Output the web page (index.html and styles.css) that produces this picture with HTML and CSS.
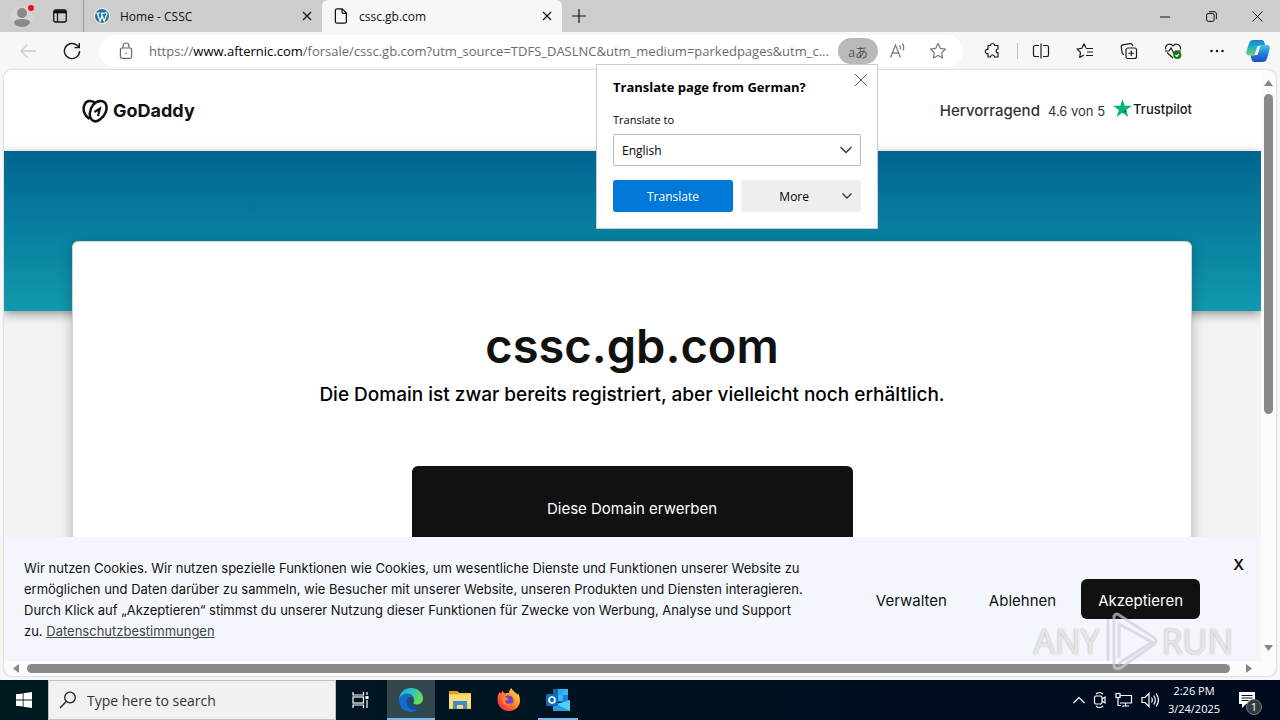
FILE: index.html
```html
<!DOCTYPE html>
<html lang="de">
<head>
    <meta charset="UTF-8">
    <meta name="viewport" content="width=device-width, initial-scale=1.0">
    <title>cssc.gb.com</title>
    <link rel="stylesheet" href="styles.css">
</head>
<body>
    <div class="tabbar">
        <button class="profile" aria-label="Profile">
            <svg width="24" height="24" viewBox="0 0 24 24"><circle cx="12" cy="13" r="11" fill="#d6d4d3"/><circle cx="12" cy="9" r="5" fill="#8c8a88"/><path d="M4 19c0-3 3-4 8-4s8 1 8 4c-2 3-5 4-8 4s-6-1-8-4z" fill="#8c8a88"/><circle cx="21" cy="4" r="3" fill="#e81123"/></svg>
        </button>
        <button class="workspaces" aria-label="Tab actions">
            <svg width="16" height="16" viewBox="0 0 16 16" fill="none" stroke="#111"><rect x="1.7" y="2" width="12.6" height="12" rx="2" stroke-width="1.3"/><path d="M2 3.8h12" stroke-width="3"/><path d="M5.5 5v9" stroke-width="1.2"/></svg>
        </button>
        <div class="tab">
            <svg width="16" height="16" viewBox="0 0 16 16"><circle cx="8" cy="8" r="8" fill="#e9f2f7"/><circle cx="8" cy="8" r="7" fill="#21759b"/><path d="M2.3 5.2h3.6M7 5.2h4M3.2 5.2l3 8 2-5.8M7.2 5.2l3 8 2.4-6.6c.4-1.3-.7-1.7-.7-2.8" fill="none" stroke="#fff" stroke-width="1.3"/></svg>
            <span class="tab-title">Home - CSSC</span>
            <button class="tab-close" aria-label="Close tab"><svg width="10" height="10" viewBox="0 0 10 10"><path d="M1 1l8 8M9 1L1 9"/></svg></button>
        </div>
        <div class="tab active">
            <svg width="16" height="16" viewBox="0 0 16 16" fill="none" stroke="#111" stroke-width="1.2"><path d="M4 .8h5.2l4.2 4.2v8.7c0 1-.6 1.5-1.5 1.5H4c-1 0-1.6-.5-1.6-1.5V2.3C2.4 1.3 3 .8 4 .8zM9 1v3c0 1 .4 1.4 1.4 1.4h3"/></svg>
            <span class="tab-title">cssc.gb.com</span>
            <button class="tab-close" aria-label="Close tab"><svg width="10" height="10" viewBox="0 0 10 10"><path d="M1 1l8 8M9 1L1 9"/></svg></button>
        </div>
        <button class="new-tab" aria-label="New tab"><svg width="14" height="14" viewBox="0 0 14 14"><path d="M7 0v14M0 7h14" stroke="#111" stroke-width="1.2"/></svg></button>
        <div class="window-controls">
            <button aria-label="Minimize"><svg width="11" height="11" viewBox="0 0 11 11"><path d="M0 6h10"/></svg></button>
            <button aria-label="Restore"><svg width="11" height="11" viewBox="0 0 11 11"><rect x=".6" y="2.5" width="7.5" height="7.9" rx="1.5"/><path d="M3 .7h5c1.5 0 2.4.9 2.4 2.4v5"/></svg></button>
            <button aria-label="Close"><svg width="11" height="11" viewBox="0 0 11 11"><path d="M.5.5l10 10M10.5.5l-10 10"/></svg></button>
        </div>
    </div>

    <div class="toolbar">
        <button class="nav-btn" aria-label="Back"><svg width="18" height="16" viewBox="0 0 18 16" fill="none" stroke="#c9c9c9" stroke-width="1.3"><path d="M17 8H2M8.5 1.5L2 8l6.5 6.5"/></svg></button>
        <button class="nav-btn" aria-label="Refresh"><svg width="18" height="18" viewBox="0 0 18 18" fill="none" stroke="#1b1b1b" stroke-width="1.4"><path d="M16.6 9a7.6 7.6 0 1 1-2.4-5.5l1.8 1.8M16.3 1v4.6h-4.8"/></svg></button>
        <div class="address">
            <svg width="14" height="18" viewBox="0 0 14 18" fill="none" stroke="#666" stroke-width="1.2"><rect x="1.4" y="6" width="11.2" height="10.4" rx="1.8"/><path d="M4 6V4a3 3 0 0 1 6 0v2"/><circle cx="7" cy="11.2" r=".8" fill="#666" stroke="none"/></svg>
            <a class="url" href="#">https://<b>www.afternic.com</b>/forsale/cssc.gb.com?utm_source=TDFS_DASLNC&amp;utm_medium=parkedpages&amp;utm_c...</a>
            <button class="translate-pill" aria-label="Translate">aあ</button>
            <button class="addr-btn" aria-label="Read aloud"><svg width="18" height="18" viewBox="0 0 18 18" fill="none" stroke="#777" stroke-width="1.2"><path d="M1.5 15.500L6.500 3l5 12.500M3.200 11.200h6.600M10.500 3.500c1 1 1.200 2.500.6 4M13 1.500c2 2 2 5 .8 7"/></svg></button>
            <button class="addr-btn" aria-label="Favorite"><svg width="18" height="18" viewBox="0 0 18 18" fill="none" stroke="#777" stroke-width="1.2"><path d="M9 1.500l2.300 4.800 5.200.7-3.800 3.700.9 5.300L9 13.500 4.400 16l.9-5.300L1.500 7l5.200-.7z" stroke-linejoin="round"/></svg></button>
        </div>
        <div class="tools">
            <button aria-label="Extensions"><svg width="18" height="18" viewBox="0 0 18 18"><path d="M4 3.500h2.500a2 2 0 0 1 4 0H14V7a1.600 1.600 0 0 0 0 3.800V15h-3.500a2 2 0 0 0-4 0H4v-3.500a2.100 2.100 0 1 1 0-4z" stroke-linejoin="round"/></svg></button>
            <span class="divider"></span>
            <button aria-label="Split screen"><svg width="18" height="18" viewBox="0 0 18 18"><path d="M7 3.500H3.200c-1 0-1.700.6-1.700 1.600v7.800c0 1 .7 1.600 1.700 1.600H7M11 3.500h3.800c1 0 1.700.6 1.700 1.600v7.800c0 1-.7 1.600-1.700 1.600H11M9 1.500v15"/></svg></button>
            <button aria-label="Favorites"><svg width="18" height="18" viewBox="0 0 18 18"><path d="M10 6L8 1.800 5.800 6.300 1 7l3.500 3.400-.8 5L8 13M10 6.500h7M11 10h6M10 13.500h7" stroke-linejoin="round"/></svg></button>
            <button aria-label="Collections"><svg width="18" height="18" viewBox="0 0 18 18"><rect x="6" y="6" width="10.5" height="10.5" rx="2"/><path d="M11.250 8.500v5.500M8.500 11.250H14M4 12.500c-1.200-.2-1.700-.8-1.900-1.700L1.300 5c-.2-1.200.4-2 1.500-2.200l7.400-1.200c1.200-.2 2 .3 2.300 1.500l.2 1"/></svg></button>
            <button aria-label="Browser essentials"><svg width="18" height="18" viewBox="0 0 18 18"><path d="M1.700 7.500C.8 2.200 6.500.8 9 4c2.500-3.200 8.200-1.800 7.300 3.500M3 10.500l6 5.500M1 9h4l2-3 3 5.500 1.500-2.500H17"/><circle cx="13.3" cy="13" r="4" fill="#107c10" stroke="none"/><path d="M11.500 13l1.300 1.300 2.300-2.500" stroke="#fff"/></svg></button>
            <button aria-label="Settings and more"><svg width="18" height="18" viewBox="0 0 18 18"><g fill="#1b1b1b" stroke="none"><circle cx="3.500" cy="9" r="1.3"/><circle cx="9" cy="9" r="1.3"/><circle cx="14.500" cy="9" r="1.3"/></g></svg></button>
            <button class="copilot" aria-label="Copilot">
                <svg width="24" height="24" viewBox="0 0 24 24">
                    <defs>
                        <linearGradient id="cp1" x1="0" y1="0" x2="0" y2="1"><stop offset="0" stop-color="#1b7fd0"/><stop offset=".5" stop-color="#1fb5c5"/><stop offset="1" stop-color="#7cd35d"/></linearGradient>
                        <linearGradient id="cp2" x1="0" y1="0" x2="0" y2="1"><stop offset="0" stop-color="#3cc8ea"/><stop offset=".6" stop-color="#2470d8"/><stop offset="1" stop-color="#1c4fc4"/></linearGradient>
                    </defs>
                    <path d="M7.500 1h8c2 0 2.500 1 3 3l.6 2h-3c-2 0-3 1-3.600 3l-1.700 5c-.5 1.700-1.300 2.500-3 2.500H3C.5 16.500-.2 14.500.5 12L3 4.500C3.800 2 5 1 7.500 1z" fill="url(#cp1)"/>
                    <path d="M16.500 23h-8c-2 0-2.500-1-3-3l-1-3.500h3.300c1.700 0 2.500-.8 3-2.500L12.500 9c.6-2 1.600-3 3.600-3H21c2.500 0 3.200 2 2.500 4.500L21 19.500c-.8 2.500-2 3.500-4.500 3.500z" fill="url(#cp2)"/>
                    <path d="M11.500 7h3l-3 9h-3z" fill="#f7f7f7"/>
                </svg>
            </button>
        </div>

        <div class="popup">
            <button class="popup-close" aria-label="Close"><svg width="12" height="12" viewBox="0 0 12 12"><path d="M0 0l12 12M12 0L0 12" stroke="#555"/></svg></button>
            <h2>Translate page from German?</h2>
            <label for="lang">Translate to</label>
            <div class="select-wrap">
                <select id="lang"><option>English</option></select>
                <svg width="12" height="8" viewBox="0 0 12 8"><path d="M.5 1L6 6.500 11.500 1"/></svg>
            </div>
            <div class="popup-actions">
                <button class="primary">Translate</button>
                <button class="more">More<svg width="10" height="8" viewBox="0 0 10 8"><path d="M.5 1.500L5 6l4.500-4.500"/></svg></button>
            </div>
        </div>
    </div>

    <div class="viewport">
        <div class="page">
            <header class="site-header">
                <a class="godaddy" href="#">
                    <svg width="26" height="24" viewBox="0 0 26 24" fill="none" stroke="#111" stroke-width="2.5"><path d="M7.500 20C2.500 17 .500 11 2.300 6.300 4 1.500 9.500.5 14 4.500"/><path d="M18.500 20c-2.700 2.500-6 3-8.500 1-3.500-3-2.700-10.500 1.200-15.300C15 1 21.500.6 23.800 5c2 4.500-.3 11.500-5.300 15z"/><path d="M12.500 13l5.300-3.300-1.800 7.300" stroke-width="2.200"/></svg>
                    <span>GoDaddy</span>
                </a>
                <div class="rating">
                    <strong>Hervorragend</strong>
                    <span>4.6 von 5</span>
                    <a class="trustpilot" href="#">
                        <svg width="19" height="18" viewBox="0 0 19 18"><path d="M9.500 0l2.200 6.800H19l-5.900 4.200 2.300 7-5.900-4.300L3.600 18l2.300-7L0 6.800h7.300z" fill="#00b67a"/><path d="M13.600 12.400l-.5-1.400-3.600 2.700z" fill="#005128"/></svg>
                        <span>Trustpilot</span>
                    </a>
                </div>
            </header>
            <div class="hero"></div>
            <main class="card">
                <h1>cssc.gb.com</h1>
                <p>Die Domain ist zwar bereits registriert, aber vielleicht noch erhältlich.</p>
                <button class="buy">Diese Domain erwerben</button>
            </main>
            <div class="cookies">
                <p>Wir nutzen Cookies. Wir nutzen spezielle Funktionen wie Cookies, um wesentliche Dienste und Funktionen unserer Website zu<br>
                ermöglichen und Daten darüber zu sammeln, wie Besucher mit unserer Website, unseren Produkten und Diensten interagieren.<br>
                Durch Klick auf „Akzeptieren“ stimmst du unserer Nutzung dieser Funktionen für Zwecke von Werbung, Analyse und Support<br>
                zu. <a href="#">Datenschutzbestimmungen</a></p>
                <div class="cookie-actions">
                    <button>Verwalten</button>
                    <button>Ablehnen</button>
                    <button class="accept">Akzeptieren</button>
                </div>
                <button class="cookie-close">X</button>
            </div>
        </div>
        <div class="vscroll">
            <svg width="9" height="6" viewBox="0 0 9 6"><path d="M0 6l4.500-6L9 6z"/></svg>
            <div class="track"><div class="thumb"></div></div>
            <svg width="9" height="6" viewBox="0 0 9 6"><path d="M0 0l4.500 6L9 0z"/></svg>
        </div>
        <div class="hscroll">
            <svg width="6" height="9" viewBox="0 0 6 9"><path d="M6 0L0 4.500 6 9z"/></svg>
            <div class="thumb"></div>
            <svg width="6" height="9" viewBox="0 0 6 9"><path d="M0 0l6 4.500L0 9z"/></svg>
        </div>
    </div>

    <div class="taskbar">
        <button class="task start" aria-label="Start"><svg width="16" height="16" viewBox="0 0 16 16" fill="#fff"><path d="M0 2.300l6.700-.9v6.200H0zM7.500 1.200L16 0v7.600H7.500zM0 8.400h6.700v6.200L0 13.700zM7.500 8.400H16V16l-8.500-1.200z"/></svg></button>
        <div class="search">
            <svg width="18" height="18" viewBox="0 0 18 18" fill="none" stroke="#222" stroke-width="1.3"><circle cx="11" cy="6.500" r="5.300"/><path d="M7.200 10.500L1 17"/></svg>
            <input type="text" placeholder="Type here to search" aria-label="Search">
        </div>
        <button class="task" aria-label="Task view"><svg width="18" height="16" viewBox="0 0 18 16" fill="none" stroke="#fff" stroke-width="1.2"><path d="M1 0v3h10.500V0M1 16v-3h10.500v3M15 0v3M15 8v8"/><rect x="1" y="5" width="10.5" height="6"/><path d="M13.500 5.500h3" stroke-width="3"/></svg></button>
        <button class="task current" aria-label="Edge">
            <svg width="24" height="24" viewBox="0 0 24 24">
                <defs><linearGradient id="eg" x1="0" y1="0" x2="1" y2=".5"><stop offset="0" stop-color="#2aa8dc"/><stop offset=".5" stop-color="#2fc4c0"/><stop offset="1" stop-color="#6ada58"/></linearGradient></defs>
                <path d="M0 11.500C.5 4.500 5.500 0 12 0c7 0 12 5 12 10.500 0 3.500-2.500 6-6 6-2.500 0-4-1-3.500-2 1.500-2 .5-6-4-6.500C5.500 7.600 1 9 0 11.500z" fill="url(#eg)"/>
                <path d="M0 12c.5-4 4-6.500 8-6.500 4.500 0 7 2.500 7 5.500-1-1.500-2.500-2-4-2-3 1-4 4-3 7 1.500 4 6 6 11 5-2 2-4.500 3-7 3C5 24 0 18.500 0 12z" fill="#1170c4"/>
                <path d="M8.500 11c-2 4 0 9 4.500 10.500 3.500 1 7-.5 9-3.300-5 2-11.500-.2-11.500-5 0-1 .3-2 .8-3-1 .1-2 .1-2.800.8z" fill="#0d4f9e"/>
            </svg>
        </button>
        <button class="task" aria-label="File Explorer"><svg width="22" height="18" viewBox="0 0 22 18"><path d="M0 0h8l2 2h12v16H0z" fill="#f9c94a"/><path d="M0 0h8l2 2-2 1H0z" fill="#e29d25"/><path d="M0 4h22v13H0z" fill="#fddb77"/><path d="M4 10h14v8h-4v-4H8v4H4z" fill="#3a8fd0"/></svg></button>
        <button class="task" aria-label="Firefox">
            <svg width="24" height="24" viewBox="0 0 24 24">
                <defs><linearGradient id="ff" x1="1" y1="0" x2="0" y2="1"><stop offset="0" stop-color="#fff04a"/><stop offset=".4" stop-color="#ff9a28"/><stop offset=".75" stop-color="#ff4242"/><stop offset="1" stop-color="#e02080"/></linearGradient></defs>
                <path d="M3 3.500c0 1 .3 1.700.7 2.200L6 2.500c0 1.500.7 2.500 2 3C10 4.800 11 5 12 5c0-2 1-4 2.500-5 .5 3 5 4.500 6 7L21 5c3 6 2.500 11-.7 14.500C16 24 8 24.500 3.500 19.500-.5 15-.5 8 3 3.500z" fill="url(#ff)"/>
                <path d="M8 9c4-3 8-1 8.500 3 .3 4-3.500 6-6.500 4.500-2-1-3-2.500-2.500-4l4-1c-1-1.500-2.500-2-3.500-2.500z" fill="#7a3bd0"/>
                <path d="M5 10c2-1.500 5-.5 6.500 1.200L8 13c.8 3 5 3.500 7 2-1.500 3.500-8 3.500-9.500-.5C5 13 4.500 11.500 5 10z" fill="#ff8a1f"/>
            </svg>
        </button>
        <button class="task running" aria-label="Outlook"><svg width="24" height="22" viewBox="0 0 24 22"><rect x="7" y="0" width="15" height="13" fill="#1066b5"/><path d="M12 0h5v6h-5z" fill="#28a8ea"/><path d="M17 0h5v6h-5zM12 6h5v6h-5z" fill="#35b8f1"/><path d="M17 6h5v6h-5z" fill="#1584d2"/><path d="M7 12l8 4 9-5v11H7z" fill="#2b9be0"/><path d="M24 11v11L10 15z" fill="#50d0f5"/><rect x="0" y="5" width="12" height="12" rx="1" fill="#0f6cbd"/><circle cx="6" cy="11" r="3" fill="none" stroke="#fff" stroke-width="1.7"/></svg></button>
        <div class="tray">
            <svg width="12" height="8" viewBox="0 0 12 8"><path d="M.5 7L6 1.500 11.500 7"/></svg>
            <svg width="14" height="18" viewBox="0 0 14 18"><path d="M3 3c2-2 5-2 7 0M3 15c2 2 5 2 7 0"/><rect x="1.5" y="5" width="7.5" height="8" rx="1.5"/><path d="M9 8l3-2v6l-3-2"/></svg>
            <svg width="18" height="16" viewBox="0 0 18 16"><path d="M5 3.500h11.500v7.500H5M10.500 11v3M7 14h7M3 6v7.500h3"/><rect x="1" y="1.5" width="4" height="4"/></svg>
            <svg width="18" height="16" viewBox="0 0 18 16"><path d="M1 5.500h3l4-4v13l-4-4H1zM10.500 5.500c1 1.500 1 3.500 0 5M12.800 3.500c2 2.500 2 6.500 0 9M15 1.500c3 4 3 9 0 13"/></svg>
            <div class="clock"><span>2:26 PM</span><span>3/24/2025</span></div>
            <div class="notify">
                <svg width="18" height="18" viewBox="0 0 18 18"><path d="M1 1h16v12H8l-4 4v-4H1z" fill="#fff" stroke="none"/><path d="M3.500 4.500h11M3.500 7h11M3.500 9.500h7" stroke="#04101c"/></svg>
                <span class="count">1</span>
            </div>
        </div>
    </div>

    <div class="watermark">
        <span>ANY</span>
        <svg width="54" height="62" viewBox="0 0 54 62"><path d="M4 9v42M10 5v50M15 48V14l33 18-34 22M15 5l34 22c4 2 4 6 0 8L18 57c-4 3-8 2-8-2M10 8c0-4 3-5 5-3"/></svg>
        <span>RUN</span>
    </div>
</body>
</html>
```
FILE: styles.css
```css
* {
    margin: 0;
    padding: 0;
    box-sizing: border-box;
}

body {
    height: 100vh;
    display: flex;
    flex-direction: column;
    overflow: hidden;
    background: #f7f7f7;
    font-family: "Open Sans", "Noto Sans", "Noto Sans CJK JP", sans-serif;
    font-size: 12px;
    color: #111;
}

button {
    border: none;
    background: none;
    font: inherit;
    color: inherit;
    display: flex;
    align-items: center;
    justify-content: center;
    cursor: pointer;
}

svg {
    flex: none;
}

a {
    color: inherit;
    text-decoration: none;
}

/* Tabs */
.tabbar {
    height: 32px;
    flex: none;
    display: flex;
    background: #cdcdcd;
}

.profile {
    width: 44px;
}

.workspaces {
    width: 32px;
}

.tab {
    width: 239px;
    margin-left: 7px;
    padding: 0 8px 0 10px;
    display: flex;
    align-items: center;
    gap: 10px;
    border-left: 1px solid #999;
}

.tab.active {
    width: 240px;
    margin-left: 0;
    padding-left: 11px;
    background: #f7f7f7;
    border-left: none;
    border-radius: 6px 6px 0 0;
}

.tab-title {
    flex: 1;
}

.tab-close {
    width: 14px;
    height: 20px;
}

.tab-close svg {
    stroke: #111;
    stroke-width: 1.2;
}

.new-tab {
    width: 34px;
}

.window-controls {
    margin-left: auto;
    display: flex;
}

.window-controls button {
    width: 46px;
}

.window-controls svg {
    fill: none;
    stroke: #111;
}

/* Toolbar */
.toolbar {
    height: 38px;
    flex: none;
    display: flex;
    align-items: center;
    padding: 0 3px 0 6px;
    position: relative;
    z-index: 10;
}

.nav-btn {
    width: 44px;
    height: 30px;
}

.address {
    flex: 1;
    min-width: 0;
    height: 32px;
    margin-left: 5px;
    padding: 0 5px 0 20px;
    display: flex;
    align-items: center;
    background: #fff;
    border-radius: 16px;
}

.url {
    flex: 1;
    min-width: 0;
    margin-left: 16px;
    overflow: hidden;
    white-space: nowrap;
    font-size: 13px;
    color: #6b6b6b;
}

.url b {
    font-weight: 400;
    color: #000;
}

.translate-pill {
    width: 40px;
    height: 26px;
    border-radius: 13px;
    background: #b9b9b9;
    color: #555;
    font-size: 13px;
}

.addr-btn {
    width: 40px;
    height: 26px;
}

.tools {
    display: flex;
    align-items: center;
    margin-left: 8px;
}

.tools button {
    width: 44px;
    height: 30px;
}

.tools svg {
    fill: none;
    stroke: #1b1b1b;
    stroke-width: 1.2;
}

.tools .copilot {
    width: 38px;
}

.tools .copilot svg {
    stroke: none;
}

.divider {
    width: 1px;
    height: 16px;
    margin: 0 1px 0 2px;
    background: #c4c4c4;
}

/* Translate popup */
.popup {
    position: absolute;
    top: 32px;
    right: 402px;
    width: 282px;
    padding: 12px 16px 16px;
    background: #fff;
    border: 1px solid #ccc;
    color: #000;
}

.popup h2 {
    font-size: 13px;
    line-height: 20px;
}

.popup label {
    display: block;
    margin: 13px 0 5px;
    line-height: 19px;
    font-size: 11px;
}

.popup-close {
    position: absolute;
    top: 8px;
    right: 9px;
    width: 14px;
    height: 14px;
}

.select-wrap {
    position: relative;
}

.select-wrap select {
    width: 100%;
    height: 32px;
    padding: 0 8px;
    appearance: none;
    background: #fff;
    border: 1px solid #bbb;
    border-radius: 2px;
    font: inherit;
    color: #000;
}

.select-wrap svg {
    position: absolute;
    right: 9px;
    top: 12px;
}

.select-wrap svg,
.more svg {
    fill: none;
    stroke: #333;
    stroke-width: 1.3;
}

.popup-actions {
    display: grid;
    grid-template-columns: 1fr 1fr;
    gap: 8px;
    margin-top: 14px;
}

.popup-actions button {
    height: 32px;
    border-radius: 3px;
}

.popup-actions .primary {
    background: #0078d7;
    color: #fff;
}

.popup-actions .more {
    background: #eee;
    justify-content: flex-end;
    gap: 33px;
    padding-right: 9px;
}

/* Page area */
.viewport {
    flex: 1;
    min-height: 0;
    margin: 0 4px 4px;
    display: grid;
    grid-template-columns: 1fr 15px;
    grid-template-rows: 1fr 15px;
    background: #fcfcfc;
    border-radius: 8px;
    box-shadow: 0 0 2px #aaa;
    overflow: hidden;
}

.page {
    position: relative;
    overflow: hidden;
    background: #f3f3f3;
    font-family: Inter, "Open Sans", sans-serif;
}

.site-header {
    height: 81px;
    padding: 0 69px 0 78px;
    display: flex;
    align-items: center;
    justify-content: space-between;
    background: #fff;
}

.godaddy {
    display: flex;
    align-items: center;
    gap: 5px;
    font-size: 18px;
    font-weight: 700;
}

.rating {
    display: flex;
    align-items: center;
    gap: 8px;
    font-size: 13px;
    color: #333;
}

.rating strong {
    font-size: 15px;
    font-weight: 500;
}

.trustpilot {
    display: flex;
    align-items: center;
    gap: 1px;
    padding-bottom: 3px;
    font-weight: 500;
    color: #191919;
}

.trustpilot svg {
    margin-bottom: 3px;
}

.hero {
    height: 160px;
    background: linear-gradient(#006591, #1199ad);
    box-shadow: 0 3px 10px rgba(0, 0, 0, 0.4);
}

.card {
    position: relative;
    height: 460px;
    margin: -70px 69px 0 68px;
    padding-top: 74px;
    display: flex;
    flex-direction: column;
    align-items: center;
    background: #fff;
    border: 1px solid #d4d4d4;
    border-radius: 6px;
    box-shadow: 0 4px 14px rgba(0, 0, 0, 0.25);
    text-align: center;
}

.card h1 {
    font-size: 47px;
    line-height: 60px;
    font-weight: 600;
}

.card p {
    margin-top: 5px;
    font-size: 19px;
    line-height: 28px;
    font-weight: 500;
    color: #000;
}

.buy {
    width: 441px;
    height: 84px;
    margin-top: 57px;
    background: #111;
    border-radius: 6px;
    color: #fff;
    font-size: 15px;
}

/* Cookie banner lies over the page */
.cookies {
    position: absolute;
    left: 0;
    right: 0;
    bottom: 0;
    height: 124px;
    padding: 21px 61px 0 20px;
    display: flex;
    justify-content: space-between;
    background: #f3f7fd;
}

.cookies p {
    font-size: 13px;
    line-height: 21px;
    white-space: nowrap;
}

.cookies p a {
    color: #444;
    text-decoration: underline;
}

.cookie-actions {
    display: flex;
    gap: 8px;
    margin-top: 21px;
}

.cookie-actions button {
    height: 40px;
    padding: 2px 17px 0;
    border-radius: 6px;
    font-size: 15px;
}

.cookie-actions .accept {
    background: #111;
    color: #fff;
}

.cookie-close {
    position: absolute;
    top: 18px;
    right: 17px;
    font-size: 15px;
    line-height: 20px;
    font-weight: 600;
}

/* Scrollbars */
.vscroll,
.hscroll {
    display: flex;
    align-items: center;
    gap: 8px;
}

.vscroll {
    flex-direction: column;
    padding: 10px 0;
}

.hscroll {
    padding: 0 9px;
}

.vscroll svg,
.hscroll svg {
    fill: #858585;
}

.track {
    flex: 1;
}

.thumb {
    background: #8a8a8a;
    border-radius: 5px;
}

.vscroll .thumb {
    width: 9px;
    height: 59%;
}

.hscroll .thumb {
    flex: 1;
    height: 9px;
    margin-right: 8px;
}

/* Taskbar */
.taskbar {
    height: 40px;
    flex: none;
    display: flex;
    background: linear-gradient(90deg, #001a22, #000a1e);
    color: #fff;
}

.task {
    width: 49px;
}

.task.start {
    width: 48px;
}

.task.current {
    width: 48px;
    margin-left: 2px;
    background: #33474f;
    box-shadow: inset 0 -2px #76b9ed;
}

.task.running {
    box-shadow: inset 0 -2px #76b9ed;
    width: 40px;
    margin-left: 5px;
}

.search {
    width: 288px;
    padding-left: 10px;
    display: flex;
    align-items: center;
    gap: 10px;
    background: #f1f1f1;
    border: 1px solid #c0c0c0;
}

.search input {
    flex: 1;
    min-width: 0;
    border: none;
    background: none;
    font: inherit;
    font-size: 14px;
}

.search input::placeholder {
    color: #333;
}

.tray {
    margin-left: auto;
    padding-right: 24px;
    display: flex;
    align-items: center;
    gap: 8px;
}

.tray svg {
    fill: none;
    stroke: #fff;
    stroke-width: 1.2;
}

.clock {
    width: 54px;
    display: flex;
    flex-direction: column;
    align-items: center;
    line-height: 18px;
    font-size: 11px;
}

.notify {
    position: relative;
    display: flex;
    margin-left: 9px;
}

.count {
    position: absolute;
    left: 8px;
    top: 8px;
    width: 16px;
    height: 16px;
    border: 1px solid #777;
    border-radius: 50%;
    background: #333a42;
    line-height: 14px;
    text-align: center;
    font-size: 11px;
}

/* Watermark over everything */
.watermark {
    position: absolute;
    right: 47px;
    bottom: 48px;
    z-index: 20;
    display: flex;
    align-items: center;
    gap: 4px;
    font-size: 34px;
    line-height: 62px;
    color: rgba(255, 255, 255, 0.7);
    text-shadow: 0 0 2px rgba(120, 120, 120, 0.7);
    pointer-events: none;
}

.watermark svg {
    fill: none;
    stroke: rgba(205, 208, 212, 0.7);
    stroke-width: 3;
}
```
